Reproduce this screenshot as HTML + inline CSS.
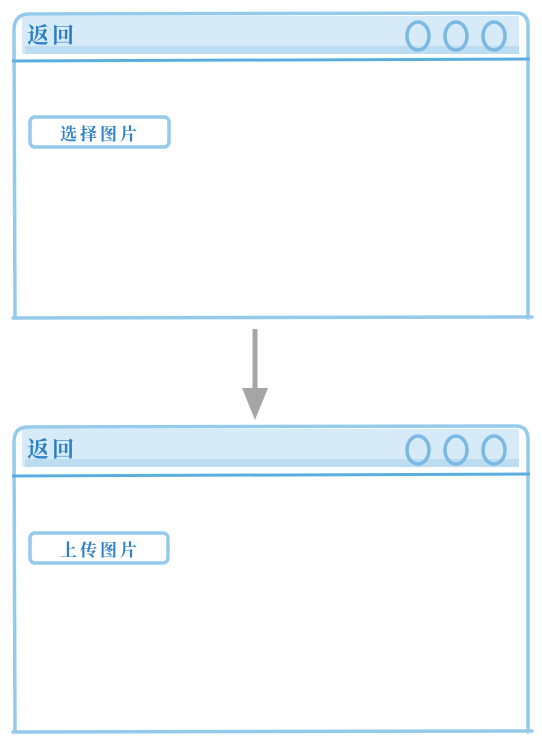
<!DOCTYPE html>
<html><head><meta charset="utf-8"><style>
body{margin:0;background:#fff;width:542px;height:748px;overflow:hidden}
svg{display:block}
text{font-family:"Liberation Serif","Noto Serif CJK SC",serif;font-weight:bold;fill:#2a7fc8}
</style></head><body>
<svg width="542" height="748" viewBox="0 0 542 748">
<rect x="22" y="16" width="497" height="38" fill="#d6eaf7"/>
<rect x="25" y="46" width="494" height="8" fill="#bcdcf1"/>
<path d="M15 318 L14 30 Q14 15 28 14 L516 13 Q528 13 528 26 L528 318 M13 318 L532 317" fill="none" stroke="#94cbeb" stroke-width="3.5" stroke-linecap="round"/>
<path d="M12 61 L530 59" stroke="#5aaee0" stroke-width="3"/>
<g fill="none" stroke="#7ab9e3" stroke-width="3.5">
<ellipse cx="418" cy="36" rx="11" ry="14"/><ellipse cx="456" cy="36" rx="11" ry="14"/><ellipse cx="494" cy="36" rx="11" ry="14"/>
</g>
<text x="27" y="43" font-size="22" letter-spacing="3">返回</text>
<rect x="30" y="117" width="139" height="30" rx="5" fill="none" stroke="#94cbeb" stroke-width="3.5"/>
<text x="60" y="140" font-size="17" letter-spacing="3">选择图片</text>
<path d="M255 329 L255 390" stroke="#a5a5a5" stroke-width="5"/>
<path d="M242 388 L268 388 L255 420 Z" fill="#a5a5a5"/>
<rect x="22" y="429" width="497" height="38" fill="#d6eaf7"/>
<rect x="25" y="459" width="494" height="8" fill="#bcdcf1"/>
<path d="M15 732 L14 442 Q14 427 28 427 L516 426 Q528 426 528 440 L528 732 M13 732 L532 731" fill="none" stroke="#94cbeb" stroke-width="3.5" stroke-linecap="round"/>
<path d="M12 476 L530 474" stroke="#5aaee0" stroke-width="3"/>
<g fill="none" stroke="#7ab9e3" stroke-width="3.5">
<ellipse cx="418" cy="450" rx="11" ry="14"/><ellipse cx="456" cy="450" rx="11" ry="14"/><ellipse cx="494" cy="450" rx="11" ry="14"/>
</g>
<text x="27" y="457" font-size="22" letter-spacing="3">返回</text>
<rect x="30" y="533" width="138" height="30" rx="5" fill="none" stroke="#94cbeb" stroke-width="3.5"/>
<text x="60" y="556" font-size="17" letter-spacing="3">上传图片</text>
</svg>
</body></html>
